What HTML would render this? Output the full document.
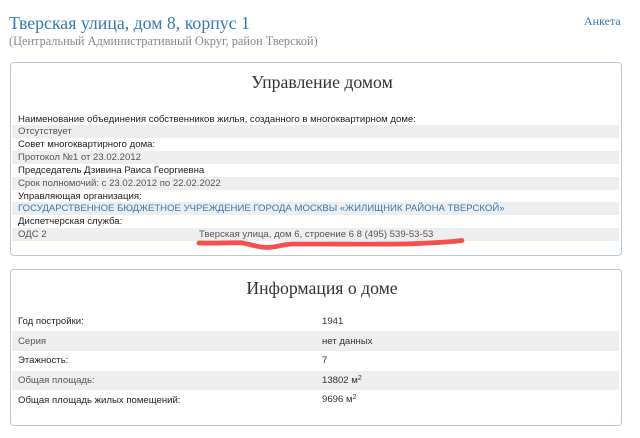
<!DOCTYPE html>
<html lang="ru">
<head>
<meta charset="utf-8">
<style>
html,body{margin:0;padding:0;background:#fff;width:640px;height:438px;overflow:hidden}
body{position:relative;font-family:"Liberation Sans",sans-serif;font-size:9.58px;color:#333}
div{position:absolute;white-space:nowrap}
.serif{font-family:"Liberation Serif",serif}
.panel{left:10px;width:610px;border:1px solid #b9c9dc;border-radius:4px;background:#fff;box-sizing:content-box}
.g{left:11.500px;width:607.500px;background:#eee}
.t{left:18px;line-height:13px;height:13px;color:#222}
.m{color:#555}
.v{left:322px;line-height:14px;color:#333}
sup{font-size:7px;line-height:0;vertical-align:baseline;position:relative;top:-3.5px}
</style>
</head>
<body>
<div class="serif" style="left:9px;top:10.500px;font-size:17.800px;line-height:24px;color:#337ab7">Тверская улица, дом 8, корпус 1</div>
<div class="serif" style="left:9px;top:33px;font-size:12.320px;line-height:16px;color:#888">(Центральный Административный Округ, район Тверской)</div>
<div class="serif" style="left:584px;top:13px;font-size:12px;line-height:16px;color:#337ab7">Анкета</div>

<div class="panel" style="top:62px;height:192px"></div>
<div class="serif" style="left:11px;width:622px;top:70px;text-align:center;font-size:17.700px;line-height:24px;color:#333">Управление домом</div>

<div class="g" style="top:125px;height:13px"></div>
<div class="g" style="top:151px;height:13px"></div>
<div class="g" style="top:177px;height:13px"></div>
<div class="g" style="top:202px;height:13px"></div>
<div class="g" style="top:228px;height:13px"></div>

<div class="t" style="top:113px">Наименование объединения собственников жилья, созданного в многоквартирном доме:</div>
<div class="t m" style="top:125px">Отсутствует</div>
<div class="t" style="top:138px">Совет многоквартирного дома:</div>
<div class="t m" style="top:151px">Протокол №1 от 23.02.2012</div>
<div class="t" style="top:164px">Председатель Дзивина Раиса Георгиевна</div>
<div class="t m" style="top:177px">Срок полномочий: с 23.02.2012 по 22.02.2022</div>
<div class="t" style="top:190px">Управляющая организация:</div>
<div class="t" style="top:202px;color:#337ab7">ГОСУДАРСТВЕННОЕ БЮДЖЕТНОЕ УЧРЕЖДЕНИЕ ГОРОДА МОСКВЫ «ЖИЛИЩНИК РАЙОНА ТВЕРСКОЙ»</div>
<div class="t" style="top:215px">Диспетчерская служба:</div>
<div class="t m" style="top:228px">ОДС 2</div>
<div class="t m" style="top:228px;left:199px">Тверская улица, дом 6, строение 6 8 (495) 539-53-53</div>

<svg style="position:absolute;left:0;top:0" width="640" height="438" viewBox="0 0 640 438">
<path d="M199 243C215 243.500 230 242.500 241 242.800C250 244 258 247.500 267 247.500C276 247.500 282 244.500 292 244C330 243.800 380 244.500 410 243.800C430 243 447 242.500 462 240.500" fill="none" stroke="#f44e4e" stroke-width="4.800" stroke-linecap="round" stroke-linejoin="round"/>
</svg>

<div class="panel" style="top:269px;height:155px"></div>
<div class="serif" style="left:11px;width:622px;top:276px;text-align:center;font-size:17.700px;line-height:24px;color:#333">Информация о доме</div>

<div class="g" style="top:331px;height:20px"></div>
<div class="g" style="top:370.500px;height:19.500px"></div>

<div class="t" style="top:315px">Год постройки:</div>
<div class="t m" style="top:335px">Серия</div>
<div class="t" style="top:354px">Этажность:</div>
<div class="t m" style="top:374px">Общая площадь:</div>
<div class="t" style="top:394px">Общая площадь жилых помещений:</div>

<div class="v" style="top:315px">1941</div>
<div class="v m" style="top:335px">нет данных</div>
<div class="v" style="top:354px">7</div>
<div class="v m" style="top:374px">13802 м<sup>2</sup></div>
<div class="v" style="top:393px">9696 м<sup>2</sup></div>
</body>
</html>
